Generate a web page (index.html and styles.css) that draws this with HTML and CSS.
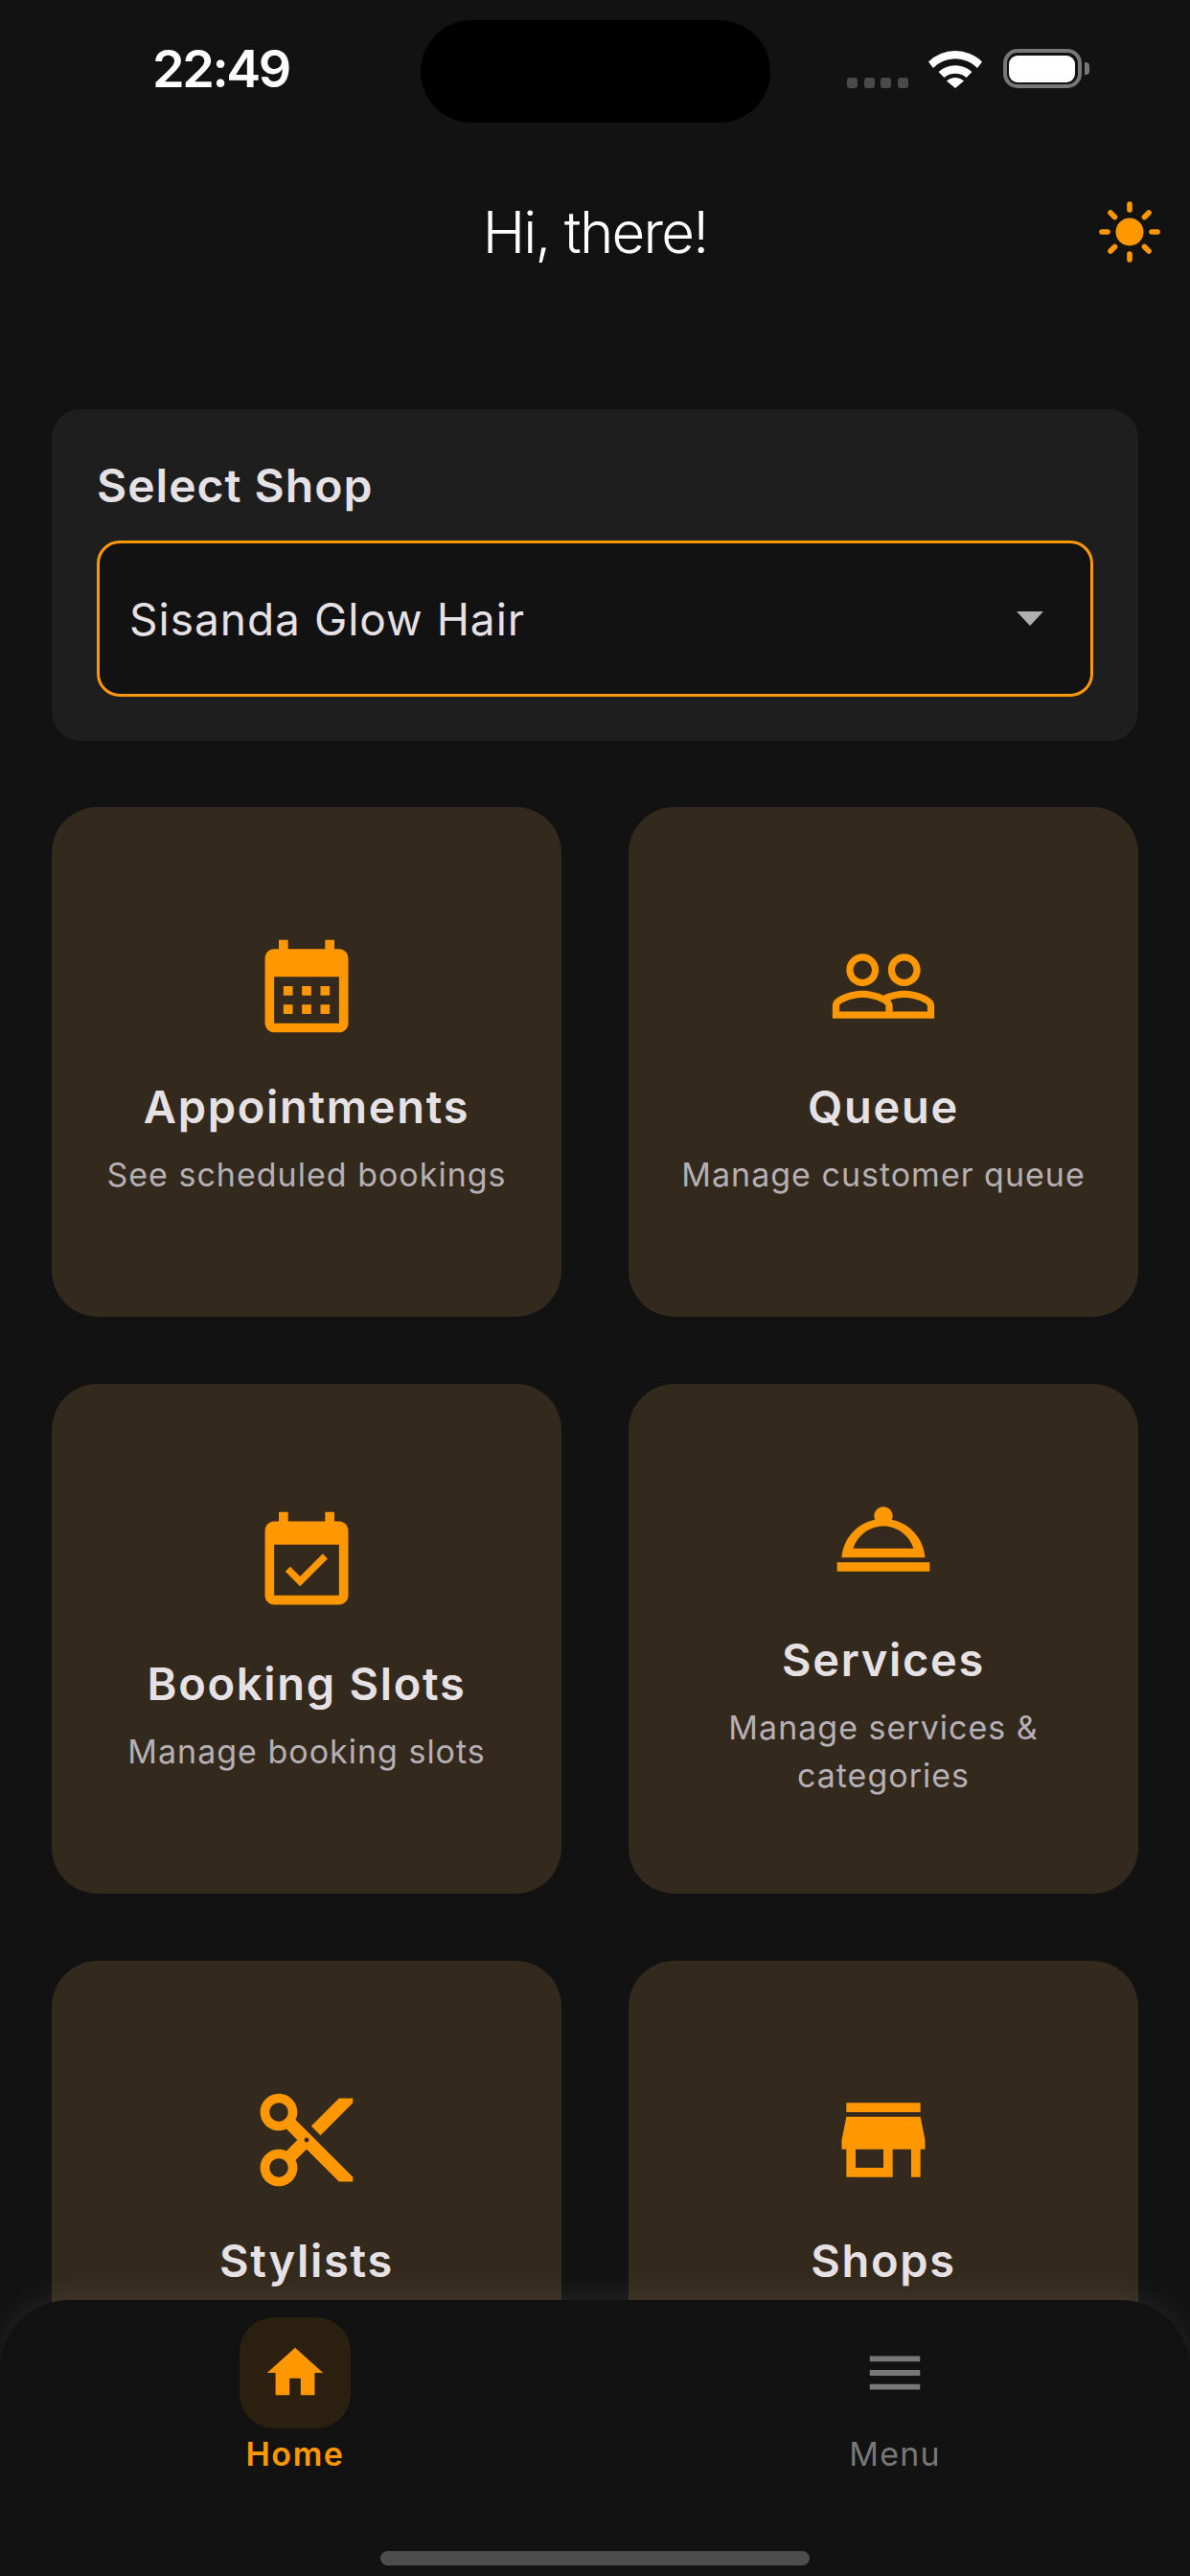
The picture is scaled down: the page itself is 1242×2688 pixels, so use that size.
FILE: index.html
```html
<!DOCTYPE html>
<html lang="en">
<head>
    <meta charset="UTF-8">
    <meta name="viewport" content="width=device-width, initial-scale=1.0">
    <title>Home</title>
    <link rel="stylesheet" href="styles.css">
</head>
<body>
    <div class="screen">

        <!-- status bar -->
        <div class="status">
            <div class="time">22:49</div>
            <div class="island"></div>
            <div class="status-icons">
                <div class="signal"><i></i><i></i><i></i><i></i></div>
                <svg class="wifi" width="56" height="40" viewBox="0 0 56 40">
                    <path d="M0 12.5A40 40 0 0 1 56 12.5L51 19A32 32 0 0 0 5 19Z"/>
                    <path d="M10.5 23A26 26 0 0 1 45.5 23L39.5 29A18 18 0 0 0 16.5 29Z"/>
                    <path d="M19 32.5A13 13 0 0 1 37 32.5L28 40Z"/>
                </svg>
                <div class="battery"><div class="battery-fill"></div></div>
                <div class="battery-nub"></div>
            </div>
        </div>

        <!-- header -->
        <div class="header">
            <div></div>
            <h1>Hi, there!</h1>
            <svg class="sun" width="68" height="68" viewBox="0 0 68 68">
                <circle cx="34" cy="34" r="14.5" fill="#ff9800"/>
                <g stroke="#ff9800" stroke-width="5.6" stroke-linecap="round">
                    <line x1="34" y1="5" x2="34" y2="11"/>
                    <line x1="34" y1="57" x2="34" y2="63"/>
                    <line x1="5" y1="34" x2="11" y2="34"/>
                    <line x1="57" y1="34" x2="63" y2="34"/>
                    <line x1="14" y1="14" x2="18.5" y2="18.5"/>
                    <line x1="54" y1="14" x2="49.5" y2="18.5"/>
                    <line x1="14" y1="54" x2="18.5" y2="49.5"/>
                    <line x1="54" y1="54" x2="49.5" y2="49.5"/>
                </g>
            </svg>
        </div>

        <div class="content">
            <div class="shop-card">
                <div class="shop-label">Select Shop</div>
                <div class="shop-select">
                    <span>Sisanda Glow Hair</span>
                    <div class="arrow"></div>
                </div>
            </div>

            <div class="tiles">
                <div class="tile">
                    <svg class="tile-icon" viewBox="0 0 24 24"><path d="M19 4h-1V2h-2v2H8V2H6v2H5c-1.11 0-1.99.9-1.99 2L3 20a2 2 0 0 0 2 2h14c1.1 0 2-.9 2-2V6c0-1.1-.9-2-2-2zm0 16H5V10h14v10zM9 14H7v-2h2v2zm4 0h-2v-2h2v2zm4 0h-2v-2h2v2zm-8 4H7v-2h2v2zm4 0h-2v-2h2v2zm4 0h-2v-2h2v2z"/></svg>
                    <div class="tile-title">Appointments</div>
                    <p class="tile-desc">See scheduled bookings</p>
                </div>
                <div class="tile">
                    <svg class="tile-icon" viewBox="0 0 24 24"><path d="M16.5 13c-1.2 0-3.07.34-4.5 1-1.43-.67-3.3-1-4.5-1C5.33 13 1 14.08 1 16.25V19h22v-2.75c0-2.17-4.33-3.25-6.5-3.25zm-4 4.5h-10v-1.25c0-.54 2.56-1.75 5-1.75s5 1.21 5 1.75v1.25zm9 0H14v-1.25c0-.46-.2-.86-.52-1.22.88-.3 1.96-.53 3.02-.53 2.44 0 5 1.21 5 1.75v1.25zM7.5 12c1.93 0 3.5-1.57 3.5-3.5S9.43 5 7.5 5 4 6.57 4 8.5 5.57 12 7.5 12zm0-5.5c1.1 0 2 .9 2 2s-.9 2-2 2-2-.9-2-2 .9-2 2-2zm9 5.5c1.93 0 3.5-1.57 3.5-3.5S18.43 5 16.5 5 13 6.57 13 8.5s1.57 3.5 3.5 3.5zm0-5.5c1.1 0 2 .9 2 2s-.9 2-2 2-2-.9-2-2 .9-2 2-2z"/></svg>
                    <div class="tile-title">Queue</div>
                    <p class="tile-desc">Manage customer queue</p>
                </div>
                <div class="tile">
                    <svg class="tile-icon" viewBox="0 0 24 24"><path d="M16.53 11.06L15.47 10l-4.88 4.88-2.12-2.12-1.06 1.06L10.59 17l5.94-5.94zM19 3h-1V1h-2v2H8V1H6v2H5c-1.11 0-1.99.9-1.99 2L3 19c0 1.1.89 2 2 2h14c1.1 0 2-.9 2-2V5c0-1.1-.9-2-2-2zm0 16H5V8h14v11z"/></svg>
                    <div class="tile-title">Booking Slots</div>
                    <p class="tile-desc">Manage booking slots</p>
                </div>
                <div class="tile">
                    <svg class="tile-icon" viewBox="0 0 24 24"><path fill-rule="evenodd" d="M2 17h20v2H2v-2zM13.84 7.79c.1-.24.16-.51.16-.79 0-1.1-.9-2-2-2s-2 .9-2 2c0 .28.06.55.16.79C6.25 8.6 3.27 11.93 3 16h18c-.27-4.07-3.25-7.4-7.16-8.21zM12 9.2c-3 0-5.6 2-6.5 4.8h13c-.9-2.8-3.5-4.8-6.5-4.8z"/></svg>
                    <div class="tile-title">Services</div>
                    <p class="tile-desc">Manage services &amp; categories</p>
                </div>
                <div class="tile">
                    <svg class="tile-icon" viewBox="0 0 24 24"><path d="M9.64 7.64c.23-.5.36-1.05.36-1.64 0-2.21-1.79-4-4-4S2 3.79 2 6s1.79 4 4 4c.59 0 1.14-.13 1.64-.36L10 12l-2.36 2.36C7.14 14.13 6.59 14 6 14c-2.21 0-4 1.79-4 4s1.79 4 4 4 4-1.79 4-4c0-.59-.13-1.14-.36-1.64L12 14l7 7h3v-1L9.64 7.64zM6 8c-1.1 0-2-.89-2-2s.9-2 2-2 2 .89 2 2-.9 2-2 2zm0 12c-1.1 0-2-.89-2-2s.9-2 2-2 2 .89 2 2-.9 2-2 2zm6-7.5c-.28 0-.5-.22-.5-.5s.22-.5.5-.5.5.22.5.5-.22.5-.5.5zM19 3l-6 6 2 2 7-7V3z"/></svg>
                    <div class="tile-title">Stylists</div>
                    <p class="tile-desc"></p>
                </div>
                <div class="tile">
                    <svg class="tile-icon" viewBox="0 0 24 24"><path d="M20 4H4v2h16V4zm1 10v-2l-1-5H4l-1 5v2h1v6h10v-6h4v6h2v-6h1zm-9 4H6v-4h6v4z"/></svg>
                    <div class="tile-title">Shops</div>
                    <p class="tile-desc"></p>
                </div>
            </div>
        </div>

        <!-- bottom tabs -->
        <div class="nav">
            <div class="nav-tabs">
                <div class="tab active">
                    <div class="tab-pill">
                        <svg width="70" height="70" viewBox="0 0 24 24"><path d="M10 20v-6h4v6h5v-8h3L12 3 2 12h3v8z"/></svg>
                    </div>
                    <div class="tab-label">Home</div>
                </div>
                <div class="tab">
                    <div class="tab-pill">
                        <svg width="70" height="70" viewBox="0 0 24 24"><path d="M3 18h18v-2H3v2zm0-5h18v-2H3v2zm0-7v2h18V6H3z"/></svg>
                    </div>
                    <div class="tab-label">Menu</div>
                </div>
            </div>
            <div class="home-bar"></div>
        </div>

    </div>
</body>
</html>
```
FILE: styles.css
```css
* {
    box-sizing: border-box;
}

body {
    margin: 0;
    background: #121212;
    font-family: Inter, "Noto Sans", sans-serif;
}

.screen {
    position: relative;
    width: 1242px;
    height: 2688px;
    overflow: hidden;
    background: #121212;
}

/* status bar */
.status {
    display: grid;
    grid-template-columns: 439px 365px 438px;
    height: 128px;
    padding-top: 21px;
}

.time {
    padding: 21px 0 0 159px;
    color: #fff;
    font-size: 54px;
    line-height: 60px;
    font-weight: 600;
    letter-spacing: -2.4px;
}

.island {
    height: 107px;
    border-radius: 54px;
    background: #000;
}

.status-icons {
    display: flex;
    align-items: flex-end;
    padding: 0 0 36px 80px;
}

.signal {
    display: flex;
    gap: 6.5px;
    margin-right: 21px;
}

.signal i {
    width: 11px;
    height: 11px;
    border-radius: 3px;
    background: #4a4a4a;
}

.wifi {
    fill: #fff;
    margin-right: 22px;
}

.battery {
    width: 82px;
    height: 41px;
    padding: 2.5px;
    border: 4px solid #777;
    border-radius: 15px;
}

.battery-fill {
    height: 100%;
    border-radius: 9px;
    background: #fff;
}

.battery-nub {
    width: 5px;
    height: 13px;
    margin: 0 0 14px 3px;
    border-radius: 0 4px 4px 0;
    background: #777;
}

/* header */
.header {
    display: grid;
    grid-template-columns: 1fr auto 1fr;
    align-items: center;
    margin-top: 78px;
    padding: 0 29px;
}

.header h1 {
    margin: 0;
    color: #fff;
    font-size: 60px;
    line-height: 72px;
    font-weight: 300;
    letter-spacing: -1.8px;
}

.sun {
    justify-self: end;
}

/* content */
.content {
    margin-top: 149px;
    padding: 0 54px;
}

.shop-card {
    height: 346px;
    padding: 46px 47px;
    border-radius: 30px;
    background: #1e1e1e;
}

.shop-label {
    height: 91px;
    padding-top: 6px;
    color: #e6e1e5;
    font-size: 48px;
    line-height: 56px;
    font-weight: 600;
    letter-spacing: 1px;
}

.shop-select {
    display: flex;
    align-items: center;
    justify-content: space-between;
    height: 163px;
    padding: 0 49px 0 31px;
    border: 3px solid #ff9800;
    border-radius: 24px;
    background: #121212;
    color: #e6e1e5;
    font-size: 46px;
    letter-spacing: 1px;
}

.arrow {
    width: 0;
    height: 0;
    border-left: 14px solid transparent;
    border-right: 14px solid transparent;
    border-top: 15px solid #b0b0b0;
}

.tiles {
    display: grid;
    grid-template-columns: 532px 532px;
    grid-auto-rows: 532px;
    gap: 70px;
    margin-top: 69px;
}

.tile {
    display: flex;
    flex-direction: column;
    align-items: center;
    justify-content: center;
    padding: 6px 40px 0;
    border-radius: 48px;
    background: #33291c;
    text-align: center;
}

.tile-icon {
    width: 116px;
    height: 116px;
    fill: #ff9800;
}

.tile-title {
    margin-top: 38px;
    color: #e6e1e5;
    font-size: 47px;
    line-height: 60px;
    font-weight: 600;
    letter-spacing: 1.7px;
}

.tile-desc {
    min-height: 50px;
    margin: 16px 0 0;
    color: #b5b0b5;
    font-size: 34px;
    line-height: 50px;
    letter-spacing: 1px;
}

/* bottom tabs */
.nav {
    position: absolute;
    left: 0;
    right: 0;
    bottom: 0;
    display: flex;
    flex-direction: column;
    height: 288px;
    padding-top: 18px;
    border-radius: 72px 72px 0 0;
    background: #121212;
    box-shadow: 0 -6px 30px rgba(255, 255, 255, 0.07);
}

.nav-tabs {
    display: flex;
    justify-content: space-between;
    padding: 0 250px;
}

.tab {
    display: flex;
    flex-direction: column;
    align-items: center;
    width: 116px;
    color: #777;
}

.tab svg {
    fill: #777;
}

.tab-pill {
    display: flex;
    align-items: center;
    justify-content: center;
    width: 116px;
    height: 116px;
    border-radius: 36px;
}

.tab-label {
    margin-top: 5px;
    font-size: 34px;
    line-height: 44px;
    letter-spacing: 1.2px;
    white-space: nowrap;
}

.tab.active {
    color: #ff9800;
}

.tab.active svg {
    fill: #ff9800;
}

.tab.active .tab-pill {
    background: #2b1f10;
}

.tab.active .tab-label {
    font-weight: 600;
    letter-spacing: 1.6px;
}

.home-bar {
    width: 448px;
    height: 15px;
    margin: auto auto 11px;
    border-radius: 8px;
    background: #4d4d4d;
}
```
